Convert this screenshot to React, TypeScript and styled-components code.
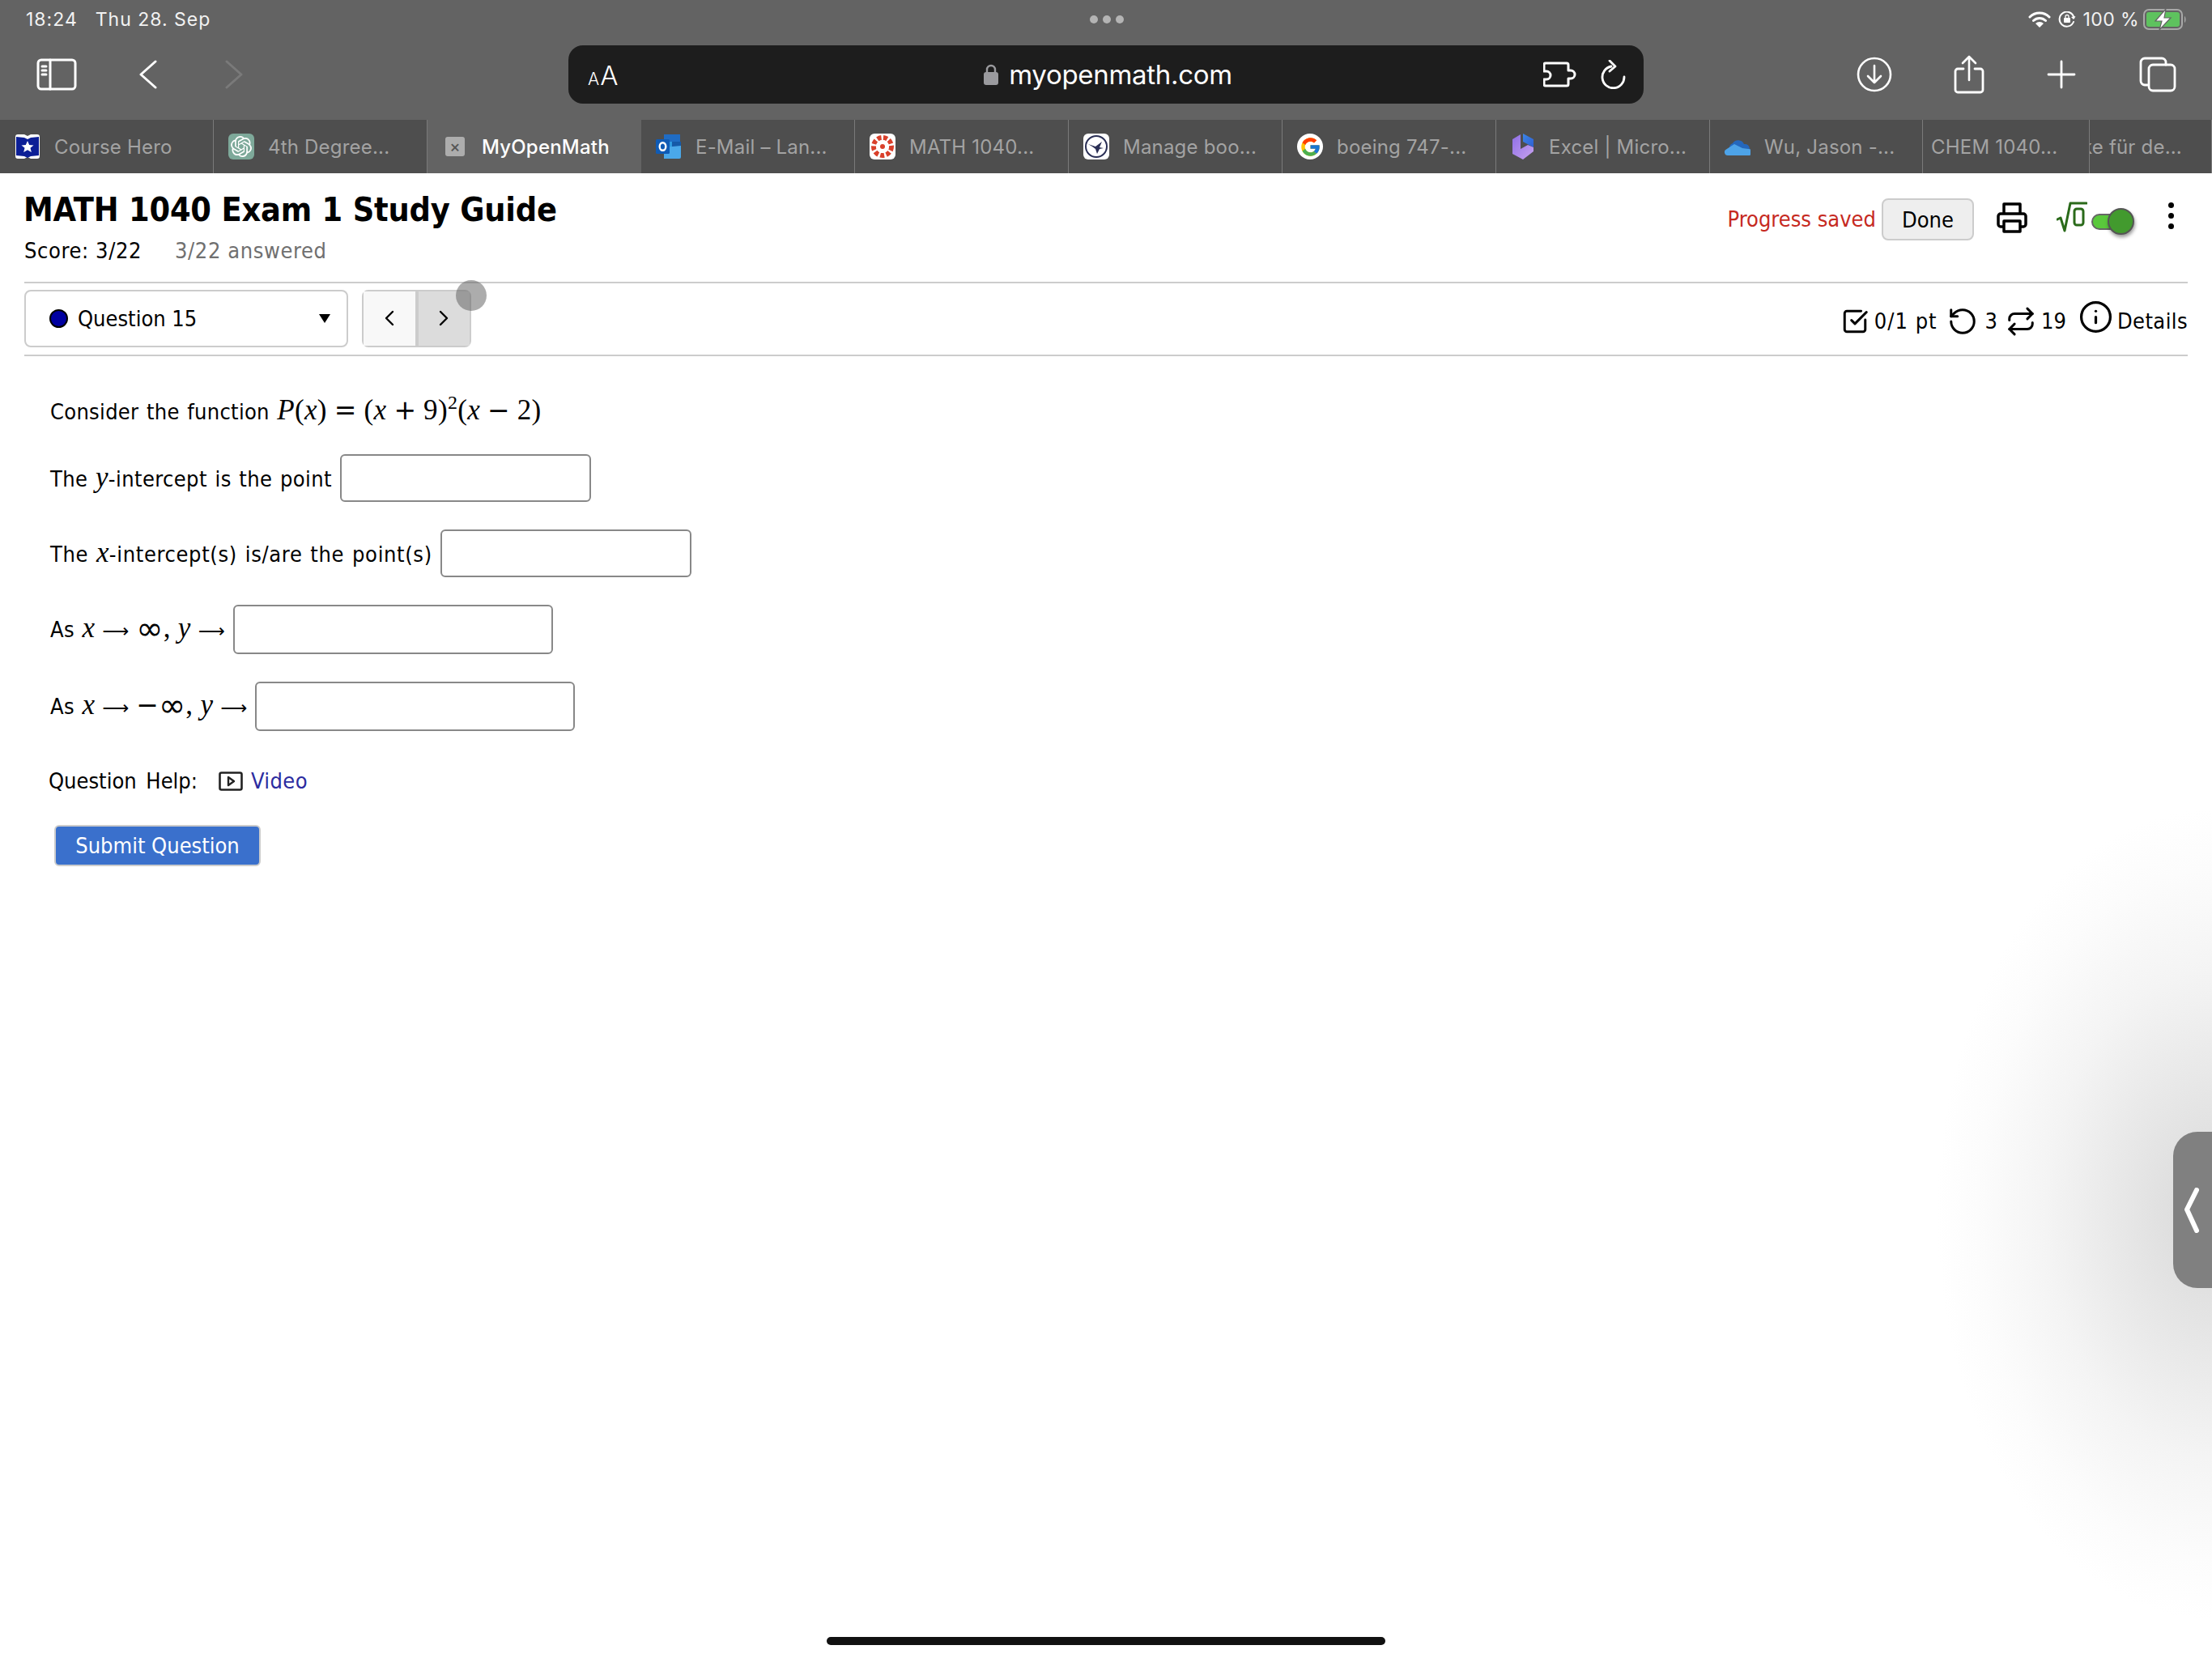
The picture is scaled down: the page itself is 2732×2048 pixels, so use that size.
import React from 'react';
import styled, { createGlobalStyle } from 'styled-components';
import { Info, Repeat, RotateCcw, SquareCheckBig } from 'lucide-react';
import { FcGoogle } from 'react-icons/fc';
import { SiOpenai } from 'react-icons/si';

const SYSTEM_FONT = '"Inter", "Roboto", sans-serif';
const PAGE_FONT = '"DejaVu Sans Condensed", "DejaVu Sans", sans-serif';
const MATH_FONT = '"Liberation Serif", serif';

const GlobalStyle = createGlobalStyle`
  html, body {
    margin: 0;
    padding: 0;
    background: #fff;
  }
`;

const Page = styled.div`
  position: relative;
  width: 2732px;
  height: 2048px;
  overflow: hidden;
  background: #fff;
  font-family: ${PAGE_FONT};
  color: #000;
`;

const Chrome = styled.header`
  background: #636363;
  font-family: ${SYSTEM_FONT};
  color: #f2f2f2;
`;

const StatusBar = styled.div`
  height: 48px;
  display: grid;
  grid-template-columns: 1fr auto 1fr;
  align-items: center;
  padding: 0 31px 0 32px;
  font-size: 23px;
  letter-spacing: 1px;
`;

const StatusLeft = styled.div`
  display: flex;
  gap: 22px;
`;

const StatusRight = styled.div`
  display: flex;
  justify-content: flex-end;
  align-items: center;
  gap: 9px;
`;

const BatteryLevel = styled.span`
  margin-right: -4px;
  letter-spacing: 0.4px;
`;

const Dots = styled.div`
  display: flex;
  gap: 6px;
`;

const Dot = styled.span`
  width: 10px;
  height: 10px;
  border-radius: 50%;
  background: #b4b4b4;
`;

const Toolbar = styled.div`
  height: 88px;
  margin-bottom: 12px;
  display: grid;
  grid-template-columns: 702px 1328px 1fr;
  align-items: center;
`;

const ToolsLeft = styled.div`
  display: flex;
  align-items: center;
  padding-left: 45px;
`;

const ToolsRight = styled.div`
  display: flex;
  align-items: center;
  padding-left: 263px;
`;

const IconSlot = styled.span<{ $w: number; $gap?: number }>`
  display: flex;
  justify-content: center;
  width: ${(p) => p.$w}px;
  margin-right: ${(p) => p.$gap ?? 0}px;
`;

const UrlBar = styled.div`
  position: relative;
  height: 72px;
  border-radius: 18px;
  background: #1d1d1d;
  display: flex;
  align-items: center;
  justify-content: center;
`;

const TextSize = styled.div`
  position: absolute;
  left: 24px;
  top: 17px;
  display: flex;
  align-items: baseline;
  gap: 1px;
  font-size: 33px;
  font-weight: 300;
  line-height: 40px;
  color: #fff;
  small {
    font-size: 21px;
  }
`;

const UrlText = styled.div`
  display: flex;
  align-items: center;
  gap: 13px;
  margin-left: 5px;
  font-size: 33px;
  letter-spacing: -0.3px;
  color: #fff;
`;

const UrlActions = styled.div`
  position: absolute;
  right: 21px;
  top: 18px;
  display: flex;
  align-items: center;
  gap: 29px;
`;

const TabBar = styled.nav`
  height: 66px;
  display: flex;
  background: #4e4e4e;
`;

const Tab = styled.div<{ $w?: number; $active?: boolean; $end?: boolean; $bare?: boolean }>`
  box-sizing: border-box;
  flex: none;
  width: ${(p) => p.$w ?? 264}px;
  display: flex;
  align-items: center;
  justify-content: ${(p) => (p.$end ? 'flex-end' : 'flex-start')};
  gap: 17px;
  padding: ${(p) => (p.$end ? '0 36px 0 0' : p.$bare ? '0 0 0 10px' : '0 0 0 18px')};
  overflow: hidden;
  white-space: nowrap;
  font-size: 24px;
  letter-spacing: 0.2px;
  font-weight: ${(p) => (p.$active ? 500 : 400)};
  color: ${(p) => (p.$active ? '#fff' : '#a3a3a3')};
  background: ${(p) => (p.$active ? '#636363' : 'transparent')};
  border-right: 1px solid ${(p) => (p.$active ? '#636363' : '#7a7a7a')};
`;

const Favicon = styled.span<{ $bg?: string; $round?: boolean }>`
  flex: none;
  width: 32px;
  height: 32px;
  border-radius: ${(p) => (p.$round ? '50%' : '6px')};
  display: flex;
  align-items: center;
  justify-content: center;
  background: ${(p) => p.$bg ?? 'transparent'};
`;

const CloseBox = styled.span`
  flex: none;
  width: 24px;
  height: 24px;
  margin: 0 4px;
  border-radius: 3px;
  background: #adadad;
  color: #555;
  display: flex;
  align-items: center;
  justify-content: center;
  font-size: 20px;
`;

const Main = styled.main`
  padding: 0 30px;
`;

const Header = styled.div`
  height: 136px;
  box-sizing: border-box;
  display: flex;
  justify-content: space-between;
  border-bottom: 2px solid #ccc;
`;

const Title = styled.h1`
  margin: 20px 0 0 -1px;
  font-size: 41px;
  line-height: 50px;
  letter-spacing: -0.2px;
  font-weight: 700;
`;

const ScoreLine = styled.div`
  display: flex;
  gap: 41px;
  margin-top: 9px;
  font-size: 27px;
  line-height: 34px;
  letter-spacing: 0.6px;
`;

const Muted = styled.span`
  color: #707070;
`;

const HeaderActions = styled.div`
  display: flex;
  align-items: flex-start;
  padding-top: 31px;
`;

const Saved = styled.span`
  margin-top: 9px;
  font-size: 27px;
  line-height: 34px;
  color: #c62a1f;
`;

const DoneButton = styled.button`
  box-sizing: border-box;
  width: 114px;
  height: 52px;
  margin-left: 7px;
  border: 2px solid #ccc;
  border-radius: 8px;
  background: #eee;
  font: 27px ${PAGE_FONT};
  color: #000;
`;

const PrintIcon = styled.svg`
  margin: 5px 0 0 28px;
`;

const RootIcon = styled.svg`
  margin: 4px 0 0 36px;
`;

const Toggle = styled.span`
  position: relative;
  box-sizing: border-box;
  width: 38px;
  height: 20px;
  margin: 19px 0 0 5px;
  border: 2px solid #666;
  border-radius: 10px;
  background: #5ac83c;
`;

const Knob = styled.span`
  position: absolute;
  left: 18px;
  top: -9px;
  box-sizing: border-box;
  width: 33px;
  height: 33px;
  border: 2px solid #555;
  border-radius: 50%;
  background: #429a2e;
  box-shadow: 1px 3px 4px rgba(0, 0, 0, 0.4);
`;

const Kebab = styled.span`
  display: flex;
  flex-direction: column;
  gap: 6px;
  margin: 5px 17px 0 57px;
  span {
    width: 7px;
    height: 7px;
    border-radius: 50%;
    background: #000;
  }
`;

const QuestionBar = styled.div`
  height: 90px;
  box-sizing: border-box;
  display: flex;
  align-items: center;
  justify-content: space-between;
  border-bottom: 2px solid #ccc;
  padding-bottom: 2px;
`;

const Picker = styled.div`
  display: flex;
  gap: 17px;
`;

const Select = styled.div`
  box-sizing: border-box;
  width: 400px;
  height: 71px;
  display: flex;
  align-items: center;
  padding: 0 20px 0 29px;
  border: 2px solid #ccc;
  border-radius: 8px;
  font-size: 27px;
`;

const StatusDot = styled.span`
  box-sizing: border-box;
  width: 23px;
  height: 23px;
  margin-right: 12px;
  border: 2px solid #000;
  border-radius: 50%;
  background: #0000a0;
`;

const Caret = styled.span`
  margin-left: auto;
  width: 0;
  height: 0;
  border-left: 7px solid transparent;
  border-right: 7px solid transparent;
  border-top: 11px solid #000;
`;

const Pager = styled.div`
  position: relative;
  display: flex;
  box-sizing: border-box;
  width: 135px;
  height: 71px;
  border: 2px solid #ccc;
  border-radius: 8px;
`;

const PagerButton = styled.span<{ $on?: boolean }>`
  flex: 1;
  display: flex;
  align-items: center;
  justify-content: center;
  background: ${(p) => (p.$on ? '#dcdcdc' : '#f8f8f8')};
  border-left: ${(p) => (p.$on ? '4px solid #ccc' : 'none')};
`;

const TouchMark = styled.span`
  position: absolute;
  right: -21px;
  top: -14px;
  width: 38px;
  height: 38px;
  border-radius: 50%;
  background: rgba(90, 90, 90, 0.5);
`;

const Meta = styled.div`
  display: flex;
  align-items: center;
  font-size: 27px;
  white-space: nowrap;
`;

const MetaItem = styled.span<{ $gap: number; $text: number }>`
  display: flex;
  align-items: center;
  gap: ${(p) => p.$text}px;
  margin-left: ${(p) => p.$gap}px;
  padding-top: 7px;
`;

const Spaced = styled.span<{ $ls: number }>`
  letter-spacing: ${(p) => p.$ls}px;
`;

const InfoIcon = styled(Info)`
  margin-top: -10px;
`;

const Question = styled.section`
  padding: 47px 0 0 32px;
  font-size: 27px;
`;

const Line = styled.div<{ $gap?: number }>`
  display: flex;
  align-items: center;
  gap: 10px;
  margin-bottom: ${(p) => p.$gap ?? 34}px;
  white-space: pre;
`;

const Prompt = styled.span<{ $ls?: number }>`
  display: inline-block;
  line-height: 40px;
  letter-spacing: ${(p) => p.$ls ?? 0.3}px;
  word-spacing: 1.5px;
`;

const Math = styled.span`
  font-family: ${MATH_FONT};
  font-size: 35px;
  letter-spacing: 0.3px;
  word-spacing: 0;
  sup {
    font-size: 24px;
    line-height: 0;
    vertical-align: 13px;
  }
`;

const Op = styled.span`
  font-family: "DejaVu Sans", sans-serif;
  font-size: 33px;
  letter-spacing: 0;
`;

const Arrow = styled(Op)`
  font-size: 23px;
`;

const Infinity = styled(Op)`
  font-size: 40px;
  line-height: 0;
  vertical-align: -3px;
`;

const Blank = styled.input<{ $w: number; $h: number }>`
  box-sizing: border-box;
  width: ${(p) => p.$w}px;
  height: ${(p) => p.$h}px;
  padding: 0;
  border: 2px solid #888;
  border-radius: 6px;
  background: #fff;
`;

const Help = styled.div`
  display: flex;
  align-items: center;
  margin: 44px 0 36px -2px;
  line-height: 36px;
  word-spacing: 4px;
`;

const VideoLink = styled.a`
  display: flex;
  align-items: center;
  gap: 10px;
  margin-left: 26px;
  letter-spacing: 0.4px;
  color: #2c2ca0;
`;

const Submit = styled.button`
  box-sizing: border-box;
  display: block;
  width: 255px;
  height: 51px;
  margin-left: 5px;
  padding: 0;
  border: 2px solid #ccc;
  border-radius: 6px;
  background: #3a70cc;
  color: #fff;
  font: 27px ${PAGE_FONT};
`;

const SideGlow = styled.div`
  position: absolute;
  right: 0;
  top: 1000px;
  width: 340px;
  height: 1000px;
  background: radial-gradient(ellipse 340px 500px at 100% 50%, #d8d8d8 0%, #e6e6e6 30%, #f4f4f4 60%, #fcfcfc 85%, #fff 100%);
`;

const SideHandle = styled.div`
  position: absolute;
  right: 0;
  top: 1398px;
  width: 48px;
  height: 193px;
  border-radius: 30px 0 0 30px;
  background: #808080;
  display: flex;
  align-items: center;
  padding-left: 13px;
  box-sizing: border-box;
`;

const HomeBar = styled.div`
  position: absolute;
  left: 1021px;
  bottom: 16px;
  width: 690px;
  height: 10px;
  border-radius: 5px;
  background: #111;
`;

const line = { fill: 'none', stroke: 'currentColor', strokeLinecap: 'round', strokeLinejoin: 'round' } as const;

const SidebarGlyph = () => (
  <svg width="50" height="40" viewBox="0 0 50 40" style={{ color: '#fff' }}>
    <rect x="2" y="2" width="46" height="36" rx="4" {...line} strokeWidth="3" />
    <path d="M17 2v36M7 10h5M7 15h5M7 20h5" {...line} strokeWidth="3" />
  </svg>
);

const Chevron = ({ dir, color, w = 22, h = 36, sw = 3 }: { dir: 'l' | 'r'; color: string; w?: number; h?: number; sw?: number }) => (
  <svg width={w} height={h} viewBox={`0 0 ${w} ${h}`} style={{ color }}>
    <path d={dir === 'l' ? `M${w - 2} 2 L2 ${h / 2} L${w - 2} ${h - 2}` : `M2 2 L${w - 2} ${h / 2} L2 ${h - 2}`} {...line} strokeWidth={sw} />
  </svg>
);

const PuzzleGlyph = () => (
  <svg width="42" height="32" viewBox="0 0 42 32">
    <path
      d="M3 2h26a2 2 0 0 1 2 2v7h3a5 5 0 0 1 0 10h-3v7a2 2 0 0 1-2 2H3a2 2 0 0 1-2-2v-6h3a5 5 0 0 0 0-10H1V4a2 2 0 0 1 2-2z"
      {...line}
      stroke="#fff"
      strokeWidth="3"
    />
  </svg>
);

const ReloadGlyph = () => (
  <svg width="32" height="36" viewBox="0 0 32 36">
    <path d="M13 8a13.5 13.5 0 1 0 16 13M11 1l7 7-7 6" {...line} stroke="#fff" strokeWidth="2.8" />
  </svg>
);

const DownloadGlyph = () => (
  <svg width="44" height="44" viewBox="0 0 44 44">
    <circle cx="22" cy="22" r="20" {...line} stroke="#fff" strokeWidth="2.6" />
    <path d="M22 11v21M14 24l8 8 8-8" {...line} stroke="#fff" strokeWidth="2.6" />
  </svg>
);

const ShareGlyph = () => (
  <svg width="38" height="48" viewBox="0 0 38 48">
    <path d="M12 17H5a3 3 0 0 0-3 3v23a3 3 0 0 0 3 3h28a3 3 0 0 0 3-3V20a3 3 0 0 0-3-3h-7" {...line} stroke="#fff" strokeWidth="2.8" />
    <path d="M19 31V2M11 10l8-8 8 8" {...line} stroke="#fff" strokeWidth="2.6" />
  </svg>
);

const PlusGlyph = () => (
  <svg width="36" height="36" viewBox="0 0 36 36">
    <path d="M18 2v32M2 18h32" {...line} stroke="#fff" strokeWidth="2.8" />
  </svg>
);

const TabsGlyph = () => (
  <svg width="46" height="44" viewBox="0 0 46 44">
    <path d="M10 35H7a5 5 0 0 1-5-5V7a5 5 0 0 1 5-5h21a5 5 0 0 1 5 5v3" {...line} stroke="#fff" strokeWidth="2.8" />
    <rect x="12" y="10" width="32" height="32" rx="5" {...line} stroke="#fff" strokeWidth="2.8" />
  </svg>
);

const LockGlyph = () => (
  <svg width="18" height="26" viewBox="0 0 18 26">
    <path d="M4 11V7a5 5 0 0 1 10 0v4" {...line} stroke="#9a9a9e" strokeWidth="2.4" />
    <rect x="0" y="10" width="18" height="16" rx="3" fill="#9a9a9e" />
  </svg>
);

const WifiGlyph = () => (
  <svg width="28" height="20" viewBox="0 0 28 20">
    <path d="M2 7a17 17 0 0 1 24 0M6.5 11.5a11 11 0 0 1 15 0" {...line} stroke="#fff" strokeWidth="3" />
    <path d="M14 20l-5-5a7 7 0 0 1 10 0z" fill="#fff" />
  </svg>
);

const RotationGlyph = () => (
  <svg width="22" height="20" viewBox="0 0 22 20">
    <path d="M19 13a9 9 0 1 1 .5-5" {...line} stroke="#fff" strokeWidth="2" />
    <path d="M21.5 6l-2.5 4-3-3z" fill="#fff" />
    <rect x="7" y="8" width="8" height="6" rx="1" fill="#fff" />
    <path d="M9 8V6.5a2 2 0 0 1 4 0V8" {...line} stroke="#fff" strokeWidth="1.3" />
  </svg>
);

const BatteryGlyph = () => (
  <svg width="54" height="26" viewBox="0 0 54 26">
    <rect x="1" y="1" width="47" height="24" rx="6" fill="none" stroke="#a8a8a8" strokeWidth="2" />
    <rect x="4" y="4" width="41" height="18" rx="3" fill="#5ec25e" />
    <path d="M51 9c2 1 2 7 0 8z" fill="#a8a8a8" />
    <path d="M28 0L15 15h8l-3 11 14-15h-8z" fill="#fff" stroke="#636363" strokeWidth="1.2" />
  </svg>
);

const CourseHeroIcon = () => (
  <svg width="32" height="32" viewBox="0 0 32 32">
    <path d="M4 1h8l4 2 4-2h8a3 3 0 0 1 3 3v24a3 3 0 0 1-3 3h-8l-4-2-4 2H4a3 3 0 0 1-3-3V4a3 3 0 0 1 3-3z" fill="#fff" />
    <path d="M2 4l10 1 4 2 4-2 10-1v23l-10 1-4 2-4-2-10-1z" fill="#0c1f96" />
    <path d="M16 9l2.2 5 5.3.4-4 3.4 1.3 5.2-4.800-2.800L11.200 23l1.300-5.200-4-3.400 5.300-.4z" fill="#fff" />
  </svg>
);

const OutlookIcon = () => (
  <svg width="32" height="32" viewBox="0 0 32 32">
    <rect x="10" y="1" width="20" height="9" fill="#1f6cc4" />
    <rect x="10" y="10" width="10" height="10" fill="#2f9be0" />
    <rect x="20" y="10" width="11" height="10" fill="#1559a8" />
    <path d="M10 17l21-2v14a2 2 0 0 1-2 2H10z" fill="#4aa8ea" />
    <rect x="0" y="7" width="17" height="18" rx="1.500" fill="#0f5bb5" />
    <ellipse cx="8.500" cy="16" rx="3.800" ry="4.800" fill="none" stroke="#fff" strokeWidth="2.400" />
  </svg>
);

const CanvasIcon = () => (
  <svg width="32" height="32" viewBox="0 0 32 32">
    <circle cx="16" cy="16" r="11" fill="none" stroke="#d9402b" strokeWidth="6" strokeDasharray="5 2.500" />
    <circle cx="16" cy="16" r="3" fill="#d9402b" />
    <circle cx="16" cy="16" r="7" fill="none" stroke="#fff" strokeWidth="2" />
  </svg>
);

const CraneIcon = () => (
  <svg width="30" height="30" viewBox="0 0 30 30">
    <circle cx="15" cy="15" r="13" fill="#fff" stroke="#2a2f55" strokeWidth="2" />
    <path d="M5 12l9 3 8-6-3 7 5 1-5 1-3 6-2-6-4-3z" fill="#2a2f55" />
  </svg>
);

const BingIcon = () => (
  <svg width="30" height="32" viewBox="0 0 30 32">
    <defs>
      <linearGradient id="bing-a" x1="0" y1="0" x2="1" y2="1">
        <stop offset="0" stopColor="#3b86e8" />
        <stop offset="1" stopColor="#2f5fd0" />
      </linearGradient>
      <linearGradient id="bing-b" x1="0" y1="0" x2="1" y2="1">
        <stop offset="0" stopColor="#8f6fe6" />
        <stop offset="1" stopColor="#c7a2ee" />
      </linearGradient>
    </defs>
    <path d="M15 0l13 7v10L15 10z" fill="url(#bing-a)" />
    <path d="M2 7l10-6v18l9-5 7 3v5L15 32 2 25z" fill="url(#bing-b)" />
  </svg>
);

const CloudIcon = () => (
  <svg width="32" height="22" viewBox="0 0 32 22">
    <path d="M6 13a6 6 0 0 1 4-6 8 8 0 0 1 14 1 6 6 0 0 1 7 6z" fill="#2467bd" />
    <path d="M4 22a4 4 0 0 1-2-7.500L12 8l10 5 8 1a4 4 0 0 1-1 8z" fill="#4da3e8" />
  </svg>
);

const tabs = [
  { label: 'Course Hero', icon: <CourseHeroIcon /> },
  { label: '4th Degree...', icon: <Favicon $bg="#7ea99a"><SiOpenai size={26} color="#fff" /></Favicon> },
  { label: 'MyOpenMath', icon: <CloseBox>×</CloseBox>, active: true },
  { label: 'E-Mail – Lan...', icon: <OutlookIcon /> },
  { label: 'MATH 1040...', icon: <Favicon $bg="#fff"><CanvasIcon /></Favicon> },
  { label: 'Manage boo...', icon: <Favicon $bg="#fff"><CraneIcon /></Favicon> },
  { label: 'boeing 747-...', icon: <Favicon $bg="#fff" $round><FcGoogle size={27} /></Favicon> },
  { label: 'Excel | Micro...', icon: <BingIcon /> },
];

export default function App() {
  return (
    <Page>
      <GlobalStyle />
      <Chrome>
        <StatusBar>
          <StatusLeft>
            <span>18:24</span>
            <span>Thu 28. Sep</span>
          </StatusLeft>
          <Dots>
            <Dot />
            <Dot />
            <Dot />
          </Dots>
          <StatusRight>
            <WifiGlyph />
            <RotationGlyph />
            <BatteryLevel>100 %</BatteryLevel>
            <BatteryGlyph />
          </StatusRight>
        </StatusBar>
        <Toolbar>
          <ToolsLeft>
            <IconSlot $w={50} $gap={77}>
              <SidebarGlyph />
            </IconSlot>
            <IconSlot $w={22} $gap={84}>
              <Chevron dir="l" color="#fff" />
            </IconSlot>
            <IconSlot $w={22}>
              <Chevron dir="r" color="#7a7a7a" />
            </IconSlot>
          </ToolsLeft>
          <UrlBar>
            <TextSize>
              <small>A</small>A
            </TextSize>
            <UrlText>
              <LockGlyph />
              myopenmath.com
            </UrlText>
            <UrlActions>
              <PuzzleGlyph />
              <ReloadGlyph />
            </UrlActions>
          </UrlBar>
          <ToolsRight>
            <IconSlot $w={44} $gap={76}>
              <DownloadGlyph />
            </IconSlot>
            <IconSlot $w={38} $gap={77}>
              <ShareGlyph />
            </IconSlot>
            <IconSlot $w={36} $gap={78}>
              <PlusGlyph />
            </IconSlot>
            <IconSlot $w={46}>
              <TabsGlyph />
            </IconSlot>
          </ToolsRight>
        </Toolbar>
        <TabBar>
          {tabs.map((t) => (
            <Tab key={t.label} $active={t.active}>
              {t.icon}
              {t.label}
            </Tab>
          ))}
          <Tab $w={263}>
            <CloudIcon />
            Wu, Jason -...
          </Tab>
          <Tab $w={206} $bare>
            CHEM 1040...
          </Tab>
          <Tab $w={151} $end>
            ke für de...
          </Tab>
        </TabBar>
      </Chrome>

      <Main>
        <Header>
          <div>
            <Title>MATH 1040 Exam 1 Study Guide</Title>
            <ScoreLine>
              <span>Score: 3/22</span>
              <Muted>3/22 answered</Muted>
            </ScoreLine>
          </div>
          <HeaderActions>
            <Saved>Progress saved</Saved>
            <DoneButton>Done</DoneButton>
            <PrintIcon width="38" height="38" viewBox="0 0 38 38">
              <path d="M9 14V2h20v12M9 30H5a3 3 0 0 1-3-3V17a3 3 0 0 1 3-3h28a3 3 0 0 1 3 3v10a3 3 0 0 1-3 3h-4M9 23h20v13H9z" {...line} stroke="#000" strokeWidth="3.500" />
            </PrintIcon>
            <RootIcon width="38" height="38" viewBox="0 0 38 38">
              <path d="M1 22l4-2 5 16L17 2h20" {...line} stroke="#2a6a1a" strokeWidth="3" />
              <rect x="22" y="9" width="11" height="20" rx="3" fill="none" stroke="#2a6a1a" strokeWidth="3" />
            </RootIcon>
            <Toggle>
              <Knob />
            </Toggle>
            <Kebab>
              <span />
              <span />
              <span />
            </Kebab>
          </HeaderActions>
        </Header>

        <QuestionBar>
          <Picker>
            <Select>
              <StatusDot />
              Question 15
              <Caret />
            </Select>
            <Pager>
              <PagerButton>
                <Chevron dir="l" color="#000" w={12} h={20} sw={2.4} />
              </PagerButton>
              <PagerButton $on>
                <Chevron dir="r" color="#000" w={12} h={20} sw={2.4} />
              </PagerButton>
              <TouchMark />
            </Pager>
          </Picker>
          <Meta>
            <MetaItem $gap={0} $text={7}>
              <SquareCheckBig size={34} strokeWidth={2.1} />
              <Spaced $ls={1}>0/1 pt</Spaced>
            </MetaItem>
            <MetaItem $gap={12} $text={9}>
              <RotateCcw size={38} strokeWidth={1.9} />
              3
            </MetaItem>
            <MetaItem $gap={10} $text={6}>
              <Repeat size={38} strokeWidth={1.9} />
              19
            </MetaItem>
            <MetaItem $gap={15} $text={5}>
              <InfoIcon size={43} strokeWidth={1.8} />
              <Spaced $ls={0.4}>Details</Spaced>
            </MetaItem>
          </Meta>
        </QuestionBar>

        <Question>
          <Line $gap={32}>
            <Prompt>
              Consider the function{' '}
              <Math>
                <i>P</i>(<i>x</i>) <Op>=</Op> (<i>x</i> <Op>+</Op> 9)<sup>2</sup>(<i>x</i> <Op>−</Op> 2)
              </Math>
            </Prompt>
          </Line>
          <Line $gap={34}>
            <Prompt $ls={0.4}>
              The <Math><i>y</i></Math>-intercept is the point
            </Prompt>
            <Blank $w={310} $h={59} />
          </Line>
          <Line>
            <Prompt $ls={0.65}>
              The <Math><i>x</i></Math>-intercept(s) is/are the point(s)
            </Prompt>
            <Blank $w={310} $h={59} />
          </Line>
          <Line>
            <Prompt>
              As <Math><i>x</i> <Arrow>⟶</Arrow> <Infinity>∞</Infinity>, <i>y</i> <Arrow>⟶</Arrow></Math>
            </Prompt>
            <Blank $w={395} $h={61} />
          </Line>
          <Line $gap={0}>
            <Prompt>
              As <Math><i>x</i> <Arrow>⟶</Arrow> <Op>−</Op><Infinity>∞</Infinity>, <i>y</i> <Arrow>⟶</Arrow></Math>
            </Prompt>
            <Blank $w={395} $h={61} />
          </Line>
          <Help>
            Question Help:
            <VideoLink>
              <svg width="30" height="24" viewBox="0 0 30 24">
                <rect x="1.500" y="1.500" width="27" height="21" rx="2" fill="none" stroke="#222" strokeWidth="2.600" />
                <path d="M12 7l7 5-7 5z" fill="none" stroke="#222" strokeWidth="2.400" strokeLinejoin="round" />
              </svg>
              Video
            </VideoLink>
          </Help>
          <Submit>Submit Question</Submit>
        </Question>
      </Main>

      <SideGlow />
      <SideHandle>
        <svg width="20" height="56" viewBox="0 0 20 56">
          <path d="M16 3L4 27l12 26" fill="none" stroke="#fff" strokeWidth="6" strokeLinecap="round" strokeLinejoin="round" />
        </svg>
      </SideHandle>
      <HomeBar />
    </Page>
  );
}
